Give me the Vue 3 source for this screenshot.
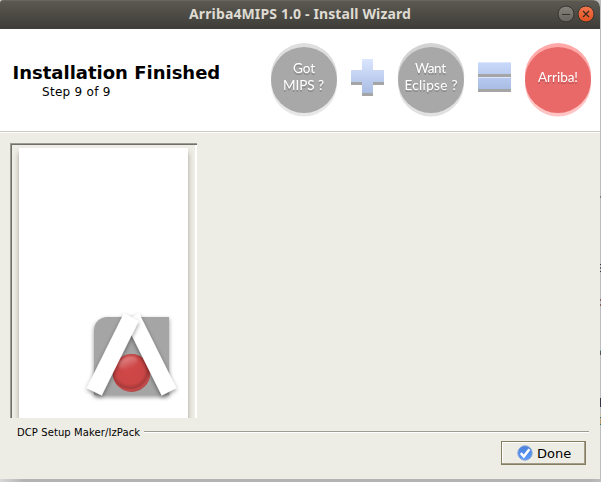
<script setup>
const steps = [
  { id: 'mips', cx: 304, tone: 'gray first', lines: [{ t: 'Got', x: 293, y: 72.5, w: 22 }, { t: 'MIPS ?', x: 283, y: 90, w: 41 }] },
  { id: 'eclipse', cx: 431, tone: 'gray', lines: [{ t: 'Want', x: 415, y: 72.5, w: 31 }, { t: 'Eclipse ?', x: 404.5, y: 90, w: 53 }] },
  { id: 'arriba', cx: 558, tone: 'red', lines: [{ t: 'Arriba!', x: 538, y: 82, w: 40 }] },
]
const specks = [
  { y: 196, h: 2, c: '#807676' },
  { y: 264, h: 1, c: '#333' },
  { y: 267, h: 2, c: '#667' },
  { y: 271, h: 1, c: '#333' },
  { y: 299, h: 2, c: '#875d55' },
  { y: 304, h: 2, c: '#875d55' },
  { y: 350, h: 1, c: '#6caabb' },
  { y: 351, h: 4, c: '#5b5655' },
  { y: 398, h: 9, c: '#383345' },
  { y: 414, h: 2, c: '#c6b894' },
  { y: 417, h: 1, c: '#347269' },
  { y: 418, h: 6, c: '#b79b70' },
  { y: 424, h: 1, c: '#347269' },
]
</script>

<template>
  <div class="desktop">
    <main class="window">
      <header class="titlebar">
        <h1>Arriba4MIPS 1.0 - Install Wizard</h1>
        <svg class="controls" width="40" height="20" viewBox="555 4 40 20">
          <defs>
            <linearGradient id="minBtn" x1="0" y1="0" x2="0" y2="1"><stop offset="0" stop-color="#85837b" /><stop offset="1" stop-color="#65635d" /></linearGradient>
            <linearGradient id="closeBtn" x1="0" y1="0" x2="0" y2="1"><stop offset="0" stop-color="#f47750" /><stop offset="1" stop-color="#e2501f" /></linearGradient>
          </defs>
          <circle cx="566" cy="14" r="8" fill="url(#minBtn)" stroke="#34332e" />
          <path d="M562 14.5h8" stroke="#34332e" />
          <circle cx="586" cy="14" r="8" fill="url(#closeBtn)" stroke="#34332e" />
          <path d="M583 11l6 6M589 11l-6 6" stroke="#3c2a20" stroke-width="1.3" />
        </svg>
      </header>

      <section class="heading">
        <div class="titles">
          <h2>Installation Finished</h2>
          <p>Step 9 of 9</p>
        </div>
        <svg class="banner" width="330" height="90" viewBox="270 35 330 90">
          <defs>
            <linearGradient id="blue" gradientUnits="userSpaceOnUse" x1="0" y1="59" x2="0" y2="93"><stop offset="0" stop-color="#dbe6ff" /><stop offset="1" stop-color="#a9bce2" /></linearGradient>
            <linearGradient id="bar" gradientUnits="userSpaceOnUse" x1="0" y1="62" x2="0" y2="90"><stop offset="0" stop-color="#c9d9fb" /><stop offset="1" stop-color="#a8bce3" /></linearGradient>
          </defs>
          <g v-for="s in steps" :key="s.id" :class="s.tone">
            <circle class="rim-low" :cx="s.cx" cy="83.5" r="33" />
            <circle class="rim-top" :cx="s.cx" cy="76.3" r="33.2" />
            <circle class="disc" :cx="s.cx" cy="80" r="33" />
            <g class="label">
              <text v-for="l in s.lines" :key="l.t" :x="l.x" :y="l.y" :textLength="l.w">{{ l.t }}</text>
            </g>
          </g>
          <path d="M362 62h11v11h11v12h-11v11h-11V85h-11V73h11z" fill="#a5a5a5" />
          <path d="M362 59h11v11h11v12h-11v11h-11V82h-11V70h11z" fill="url(#blue)" />
          <path d="M478 74h33v3h-33zM478 89h33v3h-33z" fill="#a5a5a5" />
          <path d="M478 62h33v12h-33zM478 77h33v12h-33z" fill="url(#bar)" />
          <path d="M478 62.5h33M478 77.5h33" stroke="#dce7ff" />
        </svg>
      </section>

      <section class="body">
        <div class="picture">
          <div class="sheet">
            <svg width="100" height="100" viewBox="82 305 100 100">
              <defs>
                <filter id="shade" x="-20%" y="-20%" width="140%" height="150%"><feDropShadow dx="0" dy="2" stdDeviation="2.2" flood-color="#000" flood-opacity=".42" /></filter>
                <radialGradient id="ball" cx=".46" cy=".42" r=".6"><stop offset="0" stop-color="#d04747" /><stop offset=".62" stop-color="#cc4646" /><stop offset=".8" stop-color="#a93a3a" /><stop offset=".9" stop-color="#c44c4c" /><stop offset="1" stop-color="#a84040" /></radialGradient>
                <linearGradient id="gloss" x1="0" y1="0" x2="0" y2="1"><stop offset="0" stop-color="#fff" stop-opacity=".34" /><stop offset="1" stop-color="#fff" stop-opacity="0" /></linearGradient>
                <filter id="soft" x="-30%" y="-30%" width="160%" height="160%"><feGaussianBlur stdDeviation="1.2" /></filter>
              </defs>
              <path d="M94 395V330a13 13 0 0 1 13-13h62v78z" fill="#a5a5a5" filter="url(#shade)" />
              <circle cx="131.5" cy="373" r="18.9" fill="url(#ball)" />
              <ellipse cx="128" cy="363" rx="10" ry="6" fill="url(#gloss)" transform="rotate(-22 128 363)" filter="url(#soft)" />
              <path d="M139 313L124.5 321L161.7 395.5L176.3 388z" fill="#fff" filter="url(#shade)" />
              <path d="M124 313L138.7 321L101.7 395.5L86.7 388z" fill="#fff" filter="url(#shade)" />
            </svg>
          </div>
        </div>
      </section>

      <div class="divider"><span>DCP Setup Maker/IzPack</span><i></i></div>

      <footer>
        <button>
          <svg width="16" height="16" viewBox="0 0 16 16">
            <defs><linearGradient id="done" x1="0" y1="0" x2="0" y2="1"><stop offset="0" stop-color="#4a7fd8" /><stop offset="1" stop-color="#5b9cff" /></linearGradient></defs>
            <circle cx="8" cy="8" r="7.2" fill="url(#done)" stroke="#86a4d8" />
            <path d="M3.8 8.2l3 3.3 5.6-7.3" fill="none" stroke="#fff" stroke-width="2.5" />
          </svg>
          Done
        </button>
      </footer>
    </main>
    <svg class="edge" width="1" height="482"><rect v-for="s in specks" :key="s.y" x="0" :y="s.y" width="1" :height="s.h" :fill="s.c" /></svg>
  </div>
</template>

<style>
body { margin: 0; overflow: hidden; }
</style>

<style scoped>
.desktop { width: 601px; height: 482px; display: flex; background: linear-gradient(90deg, #d8d8d8, #b3b3b3 24px, #b3b3b3 590px, #bdbdbf); }
.edge { display: block; flex: none; }
.window { width: 600px; flex: none; height: 479px; display: flex; flex-direction: column; background: #eeede5; font-family: "DejaVu Sans", sans-serif; color: #000; border-radius: 3px 7px 0 0; overflow: hidden; }
h1, h2, p { margin: 0; }
.titlebar { height: 29px; flex: none; display: grid; grid-template-columns: 1fr auto; align-items: center; padding-right: 5px; box-sizing: border-box; background: linear-gradient(#5b5951, #3d3c38); border-top: 1px solid #68665a; }
.titlebar h1 { padding-left: 189px; margin-top: -2px; white-space: nowrap; font: bold 14px/20px "Noto Sans", sans-serif; letter-spacing: .13px; color: #dfdbd2; }
.controls { display: block; margin-top: -2px; }
.heading { height: 102px; flex: none; display: flex; justify-content: space-between; background: #fff; border-bottom: 1px solid #cccbc4; box-shadow: 0 1px #fff; }
.titles { padding: 32px 0 0 12.5px; white-space: nowrap; }
h2 { font-size: 18px; line-height: 23px; }
.titles p { padding-left: 29.5px; font-size: 12px; line-height: 16px; letter-spacing: .28px; }
.banner { display: block; margin-top: 6px; }
.banner text { font: 13.5px Lato, sans-serif; fill: #fff; }
.label { filter: drop-shadow(0 2.5px 0 rgba(0, 0, 0, .17)); }
.gray .disc { fill: #a8a8a8; }
.gray .rim-top { fill: #d3d3d3; }
.gray .rim-low { fill: #e1e1e1; }
.first .rim-top { fill: #dedede; }
.first .rim-low { fill: #e7e7e7; }
.red .disc { fill: #e96969; }
.red .rim-top { fill: #ffa9a9; }
.red .rim-low { fill: #ffc4c4; }
.body { height: 286px; flex: none; box-sizing: border-box; padding: 11px 0 0 10px; }
.picture { width: 187px; height: 275px; box-sizing: border-box; border: 0 solid #9b9b94; border-width: 1px 0 0 1px; box-shadow: inset 1px 1px #716f6c, inset -2px 0 #fff; padding: 4px 0 0 8px; overflow: hidden; }
.sheet { width: 169px; height: 270px; display: flex; align-items: flex-end; background: #fff; box-shadow: 0 5px 5px rgba(50, 50, 40, .42); clip-path: inset(0 -7px 0 -7px); }
.sheet svg { margin: 0 0 13px 63px; }
.divider { height: 22px; flex: none; margin-top: 1px; padding: 0 11px 0 17px; display: flex; align-items: center; gap: 4px; font-size: 10px; white-space: nowrap; box-sizing: border-box; }
.divider span { line-height: 12px; padding-top: 5px; letter-spacing: .09px; }
.divider i { flex: 1; height: 1px; margin-top: 2px; background: #9c9b95; box-shadow: 0 1px #fff; }
footer { display: flex; justify-content: flex-end; padding: 0 14px 0 0; }
button { width: 85px; height: 24px; box-sizing: border-box; padding: 0 0 0 15px; display: flex; align-items: center; gap: 4px; border: 1px solid #857d61; box-shadow: inset -1px -1px #a49d87, inset 1px 1px #fff; background: #eeede5; font: 13px "DejaVu Sans", sans-serif; color: #000; }
</style>
